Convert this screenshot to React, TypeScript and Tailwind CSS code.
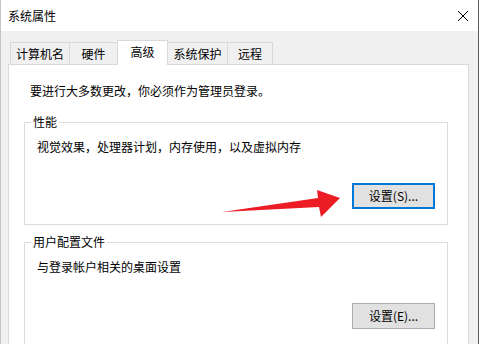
import React from "react";

const font = { fontFamily: '"Noto Sans CJK SC", "Noto Sans", sans-serif' };

function Tab({ label, w, selected }: { label: string; w: string; selected?: boolean }) {
  if (selected) {
    return (
      <div
        className={`${w} -ml-px relative z-10 h-[25px] -mb-px bg-white border border-b-0 border-[#d9d9d9] flex items-center justify-center pb-[2px]`}
      >
        {label}
      </div>
    );
  }
  return (
    <div
      className={`${w} -ml-px h-[22px] bg-[#f0f0f0] border border-b-0 border-[#d9d9d9] flex items-center justify-center`}
    >
      {label}
    </div>
  );
}

function Group({
  title,
  text,
  button,
  focused,
}: {
  title: string;
  text: string;
  button: string;
  focused?: boolean;
}) {
  return (
    <div className="relative border border-[#dcdcdc] pt-[16px] pb-[15px] pl-[12px] pr-[12px]">
      <span className="absolute left-[6px] top-[-9px] bg-white px-[2px] leading-[16px]">{title}</span>
      <div className="leading-[16px]">{text}</div>
      <div className="flex justify-end mt-[28px]">
        {focused ? (
          <div className="w-[83px] h-[26px] bg-[#e1e1e1] border-2 border-[#0078d7] flex items-center justify-center">
            {button}
          </div>
        ) : (
          <div className="w-[83px] h-[26px] bg-[#e1e1e1] border border-[#adadad] flex items-center justify-center">
            {button}
          </div>
        )}
      </div>
    </div>
  );
}

export default function App() {
  return (
    <div
      className="relative w-[479px] h-[344px] overflow-hidden bg-[#f0f0f0] border-l border-[#c4c4c4] border-r border-r-[#5b5b5b] text-[12px] text-black"
      style={font}
    >
      <div className="h-[31px] bg-white flex items-center justify-between pl-[7px] pr-[10px]">
        <span className="leading-[16px]">系统属性</span>
        <svg width="10" height="10" viewBox="0 0 10 10" className="mr-0">
          <line x1="0" y1="0" x2="10" y2="10" stroke="#000" strokeWidth="1" />
          <line x1="10" y1="0" x2="0" y2="10" stroke="#000" strokeWidth="1" />
        </svg>
      </div>
      <div className="pl-[7px] pr-[9px] pt-[9px]">
        <div className="flex items-end pl-[3px]">
          <Tab label="计算机名" w="w-[60px]" />
          <Tab label="硬件" w="w-[49px]" />
          <Tab label="高级" w="w-[51px]" selected />
          <Tab label="系统保护" w="w-[61px]" />
          <Tab label="远程" w="w-[46px]" />
        </div>
        <div className="bg-white border border-[#d9d9d9] h-[400px] pt-[18px] pl-[15px] pr-[20px]">
          <div className="leading-[16px] pl-[6px]">要进行大多数更改，你必须作为管理员登录。</div>
          <div className="mt-[23px]">
            <Group
              title="性能"
              text="视觉效果，处理器计划，内存使用，以及虚拟内存"
              button="设置(S)..."
              focused
            />
          </div>
          <div className="mt-[17px]">
            <Group title="用户配置文件" text="与登录帐户相关的桌面设置" button="设置(E)..." />
          </div>
        </div>
      </div>
      <svg
        className="absolute left-0 top-0 pointer-events-none"
        width="479"
        height="344"
        viewBox="0 0 479 344"
      >
        <polygon
          points="221,212 317,198 316,190 339,198 320,217 318,207"
          fill="#ec1c24"
        />
      </svg>
    </div>
  );
}
